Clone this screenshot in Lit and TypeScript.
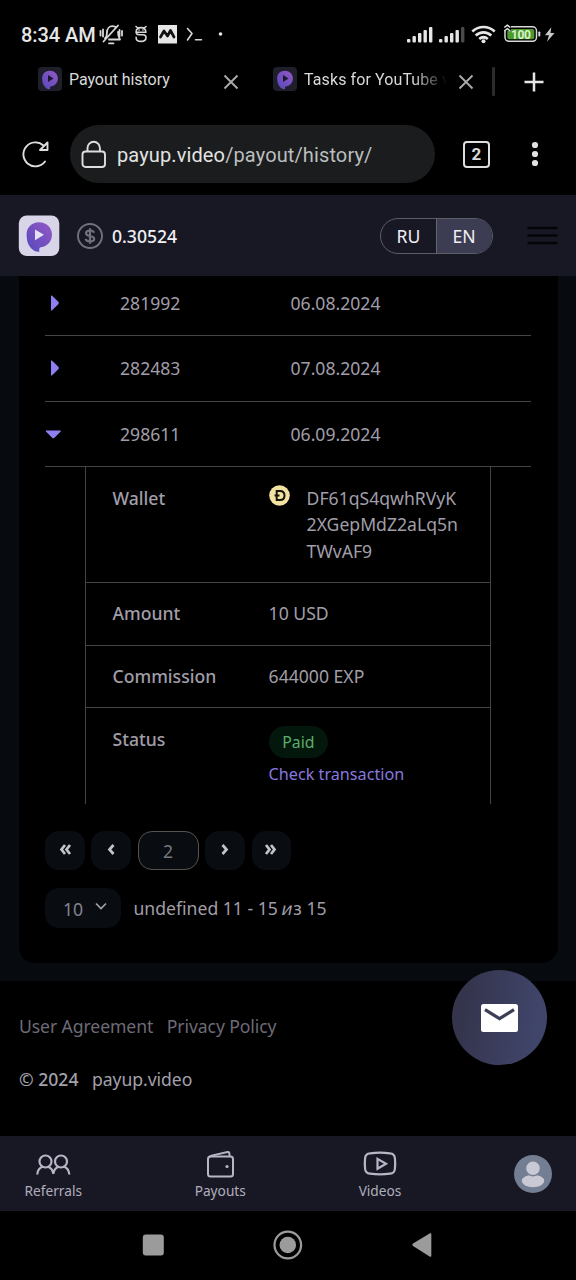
import { LitElement, html, css, svg } from "lit";
import { customElement, property } from "lit/decorators.js";

const pin = svg`<path d="M12 2.5C6.8 2.5 3 6.2 3 11.3c0 4 .8 7.6 3.3 10.2 1.9 2 4.2 2.9 6.2 2.5-.6-1-.4-1.9.2-3.1C17.800 20.600 21.500 16.600 21.500 11.600 21.500 6.300 17.400 2.500 12 2.500z" fill="url(#g)"/>`;
const pinGradient = svg`<defs><linearGradient id="g" x1="1" y1="0" x2="0" y2="1"><stop offset="0" stop-color="#9558c4"/><stop offset="1" stop-color="#5549bd"/></linearGradient></defs>`;

@customElement("status-bar")
export class StatusBar extends LitElement {
  static styles = css`
    :host { display: flex; height: 56px; box-sizing: border-box; padding: 14px 20px 0 21px; justify-content: space-between; align-items: flex-start; color: #e6e6e6; font-family: Roboto, sans-serif; }
    .left, .right { display: flex; height: 42px; align-items: center; }
    .time { font-size: 20px; font-weight: 500; width: 78px; white-space: nowrap; letter-spacing: -.08px; }
    svg { display: block; flex: none; }
    .battery { font-size: 12px; font-weight: 700; font-family: Roboto, sans-serif; }
  `;
  bars(dim: boolean) {
    return svg`${[0, 1, 2, 3, 4].map(i => svg`<rect x=${i * 5.5} y=${12.5 - i * 3} width="3.400" height=${3.500 + i * 3} rx="1" fill=${dim && i === 4 ? "#4a4a4a" : "#e6e6e6"}/>`)}`;
  }
  render() {
    return html`
      <div class="left">
        <span class="time">8:34 AM</span>
        <svg width="130" height="24" viewBox="99 23 130 24" fill="none" stroke="#d8d8d8" stroke-width="1.600" stroke-linecap="round" stroke-linejoin="round">
          <path d="M105 38.500c1.500-1.500 2-3 2-6 0-4 2.500-6.300 5.500-6.300 1.500 0 2.700.5 3.700 1.500M118 32c0 4 .8 5.500 2 7.500h-11M103.500 41.500l14.500-16M109 43.300h4.500M100.500 31v4.500M103 29.500v7M119.500 30v6.500M122 31v4.500" stroke-width="1.800"/>
          <path d="M136 26.500l1.800 1.500M146 26.500l-1.800 1.500M145.800 32c0-3-1.800-4.400-4.800-4.400s-4.900 1.400-4.900 4.400c0 2 1.500 2.800 3.500 2.800h3.400c2 0 3 .8 3 2.700 0 2.600-2 3.900-5 3.900s-4.900-1.300-4.900-4M136 32.200h10"/>
          <path d="M138.900 30h.3M142.800 30h.3" stroke-width="1.400"/>
          <rect x="158" y="25" width="19" height="18.500" fill="#e6e6e6" stroke="none"/>
          <path d="M160.500 37l3.500-6 3.500 5 3-5.500 3.500 6.500" stroke="#111" stroke-width="2.700"/>
          <path d="M187.500 28.500l4.500 5-4.500 6.500M195.500 39.700h6"/>
          <circle cx="220.500" cy="34" r="1.800" fill="#e6e6e6" stroke="none"/>
        </svg>
      </div>
      <div class="right">
        <svg width="150" height="24" viewBox="406 23 150 24">
          <g transform="translate(407 26.500)">${this.bars(false)}</g>
          <g transform="translate(439 26.500)">${this.bars(true)}</g>
          <g fill="none" stroke="#e6e6e6" stroke-width="2.700"><path d="M472.300 31.500c6.500-6 15.900-6 22.400 0M475.700 35.600c4.600-4.200 11-4.200 15.600 0M479.200 39c2.800-2.300 5.800-2.300 8.600 0"/></g>
          <circle cx="483.500" cy="41.200" r="2" fill="#e6e6e6"/>
          <rect x="505" y="26.800" width="31.500" height="14.500" rx="4" fill="none" stroke="#d8d8d8" stroke-width="1.500"/>
          <rect x="507.300" y="29" width="27" height="10.300" rx="2" fill="#4b9a2b"/>
          <path d="M503 24h8v7h-8z" fill="#000"/>
          <path d="M504.300 27.500l3-2.300 3 2.300M504.300 31l3-2.300 3 2.300" fill="none" stroke="#e6e6e6" stroke-width="1.500"/>
          <rect x="538.300" y="31.500" width="2" height="5" rx=".8" fill="#d8d8d8"/>
          <text class="battery" x="511" y="38.600" fill="#d9f2cc" textLength="20">100</text>
          <path d="M551.300 27.300l-6.300 8h4l-2 6.500 7.500-8.700h-4z" fill="#c8c8c8"/>
        </svg>
      </div>`;
  }
}

@customElement("browser-bar")
export class BrowserBar extends LitElement {
  static styles = css`
    :host { display: block; height: 139px; color: #d9d9d9; font-family: Roboto, sans-serif; }
    svg { display: block; flex: none; }
    .tabs { display: flex; height: 54px; padding-left: 37.5px; align-items: flex-start; padding-top: 11px; box-sizing: border-box; }
    .tab { display: flex; align-items: flex-start; }
    .first { width: 235.5px; }
    .label { font-size: 16px; line-height: 24px; padding-top: 1px; letter-spacing: -.06px; margin-left: 7.5px; width: 145px; margin-right: 9px; white-space: nowrap; }
    .second .label { letter-spacing: .1px; width: 143px; margin-left: 7px; margin-right: 11px; -webkit-mask-image: linear-gradient(90deg, #000 76%, transparent 100%); mask-image: linear-gradient(90deg, #000 76%, transparent 100%); }
    .close { margin-top: 7px; }
    .sep { width: 3px; height: 29px; background: #2c2c2e; margin: 0 29px 0 18px; border-radius: 1px; }
    .plus { margin-top: 5px; }
    .row { display: flex; align-items: center; height: 58px; padding: 15px 0 0 20px; }
    .url { display: flex; align-items: center; box-sizing: border-box; margin-left: 20px; width: 365px; height: 58px; border-radius: 29px; background: #1a1c1d; padding: 1px 0 0 11px; font-size: 20px; color: #bcbebf; }
    .lock { margin-right: 10px; }
    .address { letter-spacing: .12px; }
    .host { color: #e3e3e3; }
    .count { display: grid; place-items: center; box-sizing: border-box; width: 27px; height: 27px; border: 2px solid #dedede; border-radius: 4px; margin: 0 40.5px 0 28px; font-weight: 700; font-size: 17px; }
  `;
  favicon() {
    return html`<svg width="24" height="24" viewBox="0 0 24 24">${pinGradient}<rect width="24" height="24" rx="4" fill="#1f1f2c"/><g transform="translate(1.600 1.700) scale(.85)">${pin}</g><path d="M10 8l5.500 3.500L10 15z" fill="#1b1730"/></svg>`;
  }
  close() {
    return html`<svg class="close" width="16" height="16" viewBox="0 0 16 16" stroke="#aaa" stroke-width="1.900"><path d="M1.500 1.500l13 13M14.500 1.500l-13 13"/></svg>`;
  }
  render() {
    return html`
      <div class="tabs">
        <div class="tab first">${this.favicon()}<span class="label">Payout history</span>${this.close()}</div>
        <div class="tab second">${this.favicon()}<span class="label">Tasks for YouTube v</span>${this.close()}</div>
        <div class="sep"></div>
        <svg class="plus" width="20" height="20" viewBox="0 0 20 20" stroke="#e6e6e6" stroke-width="2.500"><path d="M0.500 10h19M10 .5v19"/></svg>
      </div>
      <div class="row">
        <svg width="30" height="30" viewBox="20 139 30 30" fill="none" stroke="#dedede" stroke-width="1.900" stroke-linecap="round" stroke-linejoin="round"><path d="M45 161.500A12 12 0 1 1 43.500 145.500M47.500 142.500v7.500h-7.500z"/></svg>
        <div class="url">
          <svg class="lock" width="26" height="30" viewBox="0 0 26 30" fill="none" stroke="#dedede" stroke-width="1.900"><rect x="1.500" y="11.500" width="22.500" height="15.500" rx="3"/><path d="M6.500 11.500V8a6.200 6.200 0 0 1 12.400 0v3.500"/></svg>
          <span class="address"><span class="host">payup.video</span>/payout/history/</span>
        </div>
        <div class="count">2</div>
        <svg width="8" height="26" viewBox="0 0 8 26" fill="#e2e2e2"><circle cx="4" cy="4" r="3.100"/><circle cx="4" cy="13" r="3.100"/><circle cx="4" cy="22" r="3.100"/></svg>
      </div>`;
  }
}

@customElement("site-header")
export class SiteHeader extends LitElement {
  static styles = css`
    :host { display: flex; align-items: center; height: 80.5px; box-sizing: border-box; padding: 1px 18px 0 18px; background: #181824; color: #f0f0f4; font: 500 17.6px "Noto Sans", sans-serif; }
    svg { display: block; flex: none; }
    .coin { margin: 0 9px 0 17px; }
    .balance { flex: 1; }
    .lang { display: flex; box-sizing: border-box; width: 112.5px; height: 36px; border: 1.5px solid #5d5d68; border-radius: 18px; overflow: hidden; margin-right: 34.5px; font-weight: 400; }
    .lang span { flex: 1; display: grid; place-items: center; padding-top: 1px; }
    .lang .on { background: #3c3d52; border-left: 1.5px solid #666672; }
  `;
  render() {
    return html`
      <svg width="42" height="42" viewBox="0 0 42 42">${pinGradient}<rect x=".8" y=".5" width="40.500" height="40.500" rx="8" fill="#d9d5e9"/><g transform="translate(4.500 3.800) scale(1.370)">${pin}</g><path d="M17 14.500l9 5.300-9 5.400z" fill="#e6e0f4"/></svg>
      <svg class="coin" width="26" height="26" viewBox="0 0 26 26" fill="none" stroke="#70707e" stroke-width="1.900"><circle cx="13" cy="13" r="12"/><path d="M17 9.800c-.4-1.500-1.800-2.300-4-2.300-2.500 0-4 1-4 2.700 0 3.900 8.200 1.700 8.200 5.600 0 1.700-1.700 2.700-4.200 2.700-2.400 0-4-.9-4.300-2.600M13 5.300v15.400" stroke-width="2.200"/></svg>
      <span class="balance">0.30524</span>
      <div class="lang"><span>RU</span><span class="on">EN</span></div>
      <svg width="31" height="20" viewBox="0 0 31 20" stroke="#050508" stroke-width="2.500"><path d="M.5 2h30M.5 9.500h30M.5 17h30"/></svg>`;
  }
}

@customElement("payout-row")
export class PayoutRow extends LitElement {
  @property() number = "";
  @property() date = "";
  @property({ type: Boolean }) open = false;
  static styles = css`
    :host { display: flex; align-items: center; height: 65.6px; box-sizing: border-box; border-bottom: 1px solid #444; }
    .mark { width: 75px; }
    .num { width: 170.5px; }
    svg { display: block; }
  `;
  render() {
    return html`
      <div class="mark"><svg width="18" height="18" viewBox="0 0 18 18" fill="#8f80f0">${this.open
        ? svg`<path d="M1 5.500h14.500q.7.4 0 1.200l-6.300 6.300q-.9.700-1.800 0l-6.300-6.300q-.7-.8-.1-1.200z"/>`
        : svg`<path d="M6 1.800q.4-.7 1.200 0l6.300 6.300q.7.900 0 1.800l-6.300 6.300q-.8.700-1.200 0z"/>`}</svg></div>
      <div class="num">${this.number}</div><div>${this.date}</div>`;
  }
}

@customElement("payout-card")
export class PayoutCard extends LitElement {
  static styles = css`
    :host { display: block; height: 705.500px; box-sizing: border-box; background: #070a0e; padding: 0 18.500px 18px 18.500px; font: 17.6px/26.4px "Noto Sans", sans-serif; color: #a09ea9; }
    svg { display: block; }
    .card { height: 687.500px; background: #000; border-radius: 0 0 16px 16px; box-sizing: border-box; padding: 0 26.500px; overflow: hidden; }
    .list { margin-top: -5px; height: 196.500px; }
    .detail { margin: 0 40px; height: 337px; box-sizing: border-box; border: solid #444; border-width: 0 1px; }
    .item { display: flex; box-sizing: border-box; border-bottom: 1px solid #444; padding: 17.900px 26.600px 16px; height: 63px; }
    .item.wallet { height: 115.500px; }
    .item.comm { height: 62.500px; }
    .item.status { height: 96px; border: 0; padding-top: 18px; }
    .key { width: 156px; flex: none; font-weight: 500; }
    .coin { margin: 0 17px 0 0; }
    .badge { display: block; box-sizing: border-box; width: 59.500px; height: 32px; line-height: 32px; text-align: center; border-radius: 16px; background: #03170c; color: #5caf69; font-size: 15.800px; }
    .link { display: block; font-size: 16.200px; line-height: 24px; margin-top: 4px; color: #8878df; white-space: nowrap; }
    .pages { display: flex; gap: 6.800px; margin-top: 26.500px; }
    .btn { display: grid; place-items: center; width: 39.500px; height: 39.500px; border-radius: 14px; background: #090d11; }
    .current { box-sizing: border-box; width: 61px; border: 1px solid #55554f; color: #777682; padding-top: 1px; }
    .foot { display: flex; margin-top: 18px; gap: 13px; align-items: center; }
    .select { display: flex; box-sizing: border-box; width: 75.500px; height: 39.500px; border-radius: 14px; background: #090d11; color: #85838f; padding: 8px 0 0 18px; gap: 11.500px; }
    .select svg { margin-top: 6px; }
    .cyr { display: inline-block; transform: skewX(-12deg); }
  `;
  arrow(d: string) {
    return html`<div class="btn"><svg width="16" height="16" viewBox="0 0 16 16" fill="none" stroke="#c4c4ca" stroke-width="2.700"><path d=${d}/></svg></div>`;
  }
  render() {
    return html`
      <div class="card">
        <div class="list">
          <payout-row number="281992" date="06.08.2024"></payout-row>
          <payout-row number="282483" date="07.08.2024"></payout-row>
          <payout-row number="298611" date="06.09.2024" open></payout-row>
        </div>
        <div class="detail">
          <div class="item wallet"><div class="key">Wallet</div>
            <svg class="coin" width="21" height="21" viewBox="0 0 21 21"><circle cx="10.500" cy="10.500" r="10.300" fill="#f3e3a3"/><path d="M7.700 6h3.300c2.900 0 4.500 1.700 4.500 4.500S13.900 15 11 15H7.700zM5.500 10.500h5" fill="none" stroke="#17140a" stroke-width="2"/></svg>
            <div>DF61qS4qwhRVyK<br>2XGepMdZ2aLq5n<br>TWvAF9</div></div>
          <div class="item"><div class="key">Amount</div><div>10 USD</div></div>
          <div class="item comm"><div class="key">Commission</div><div>644000 EXP</div></div>
          <div class="item status"><div class="key">Status</div><div><span class="badge">Paid</span><span class="link">Check transaction</span></div></div>
        </div>
        <div class="pages">
          ${this.arrow("M8 3L4.500 7.500 8 12M13 3L9.500 7.500 13 12")}
          ${this.arrow("M10.500 3L6.500 7.500l4 4.500")}
          <div class="btn current">2</div>
          ${this.arrow("M5.500 3L9.500 7.500l-4 4.500")}
          ${this.arrow("M3 3l3.500 4.500L3 12M8 3l3.500 4.500L8 12")}
        </div>
        <div class="foot">
          <div class="select">10<svg width="12" height="9" viewBox="0 0 12 9" fill="none" stroke="#a3a1ab" stroke-width="1.700"><path d="M1 1.500l5 5 5-5"/></svg></div>
          <span>undefined 11 - 15 <span class="cyr">и</span>з 15</span>
        </div>
      </div>`;
  }
}

@customElement("site-footer")
export class SiteFooter extends LitElement {
  static styles = css`
    :host { display: block; position: relative; height: 155px; box-sizing: border-box; padding: 32px 19px 0; font: 17.6px/26.4px "Noto Sans", sans-serif; color: #a3a1ab; }
    .line { display: flex; gap: 13.500px; margin-bottom: 27px; }
    .links { color: #6d6b77; letter-spacing: -.09px; }
    .year { font-weight: 500; }
    .site { letter-spacing: -.06px; }
    .fab { position: absolute; right: 29px; top: -11.500px; width: 95.500px; height: 95.500px; border-radius: 50%; background: linear-gradient(100deg, #34344c 15%, #40456a 85%); display: grid; place-items: center; }
    svg { display: block; }
    .fab svg { margin-top: 2px; }
  `;
  render() {
    return html`
      <div class="line links"><span>User Agreement</span><span>Privacy Policy</span></div>
      <div class="line"><span class="year">© 2024</span><span class="site">payup.video</span></div>
      <div class="fab"><svg width="37" height="28" viewBox="0 0 37 28"><rect width="37" height="28" rx="2.500" fill="#fff"/><path d="M4 5.700l14.500 9 14.500-9" fill="none" stroke="#3c3e55" stroke-width="3.200"/></svg></div>`;
  }
}

@customElement("bottom-nav")
export class BottomNav extends LitElement {
  static styles = css`
    :host { display: grid; grid-template-columns: 106.500px 227.500px 92px 150px; height: 74.500px; background: #181824; color: #b0aebc; font: 13.700px/20px "Noto Sans", sans-serif; }
    .item { display: flex; flex-direction: column; align-items: center; padding-top: 12.500px; }
    svg { display: block; }
    .label { margin-top: 2.500px; }
    .me { padding: 19px 0 0 88px; align-items: flex-start; }
  `;
  render() {
    return html`
      <div class="item"><svg width="36" height="30" viewBox="0 0 36 30" fill="none" stroke="#b7b5c6" stroke-width="2.200"><circle cx="10.500" cy="12.500" r="6"/><circle cx="26" cy="12.500" r="6"/><path d="M2.300 25.500c.2-4 2.200-7 5.700-8M13 17.700c2.800 1 4.900 3.700 5.300 7.300.4-3.500 2.300-6.200 5.200-7.300M28.500 17.500c3.500 1 5.500 4 5.800 8"/></svg><span class="label">Referrals</span></div>
      <div class="item"><svg width="30" height="30" viewBox="0 0 30 30" fill="none" stroke="#b7b5c6" stroke-width="2"><rect x="3" y="7.500" width="25" height="20" rx="2.500"/><path d="M3.500 9c.4-1.600 1.300-2 3-2.400L22.500 3c1-.2 1.600.2 1.800 1.200l.3 2.600" /><circle cx="22" cy="17.500" r="1.600" fill="#b7b5c6" stroke="none"/></svg><span class="label">Payouts</span></div>
      <div class="item"><svg width="34" height="30" viewBox="0 0 34 30" fill="none" stroke="#b7b5c6" stroke-width="2.200"><path d="M7 4.300q10-1.200 20 0 4.500.4 4.900 4.700.6 5.500 0 11-.4 4.300-4.900 4.700-10 1.200-20 0-4.500-.4-4.900-4.700-.6-5.500 0-11 .4-4.300 4.900-4.700z"/><path d="M14.500 9.800v10l8.500-5z"/></svg><span class="label">Videos</span></div>
      <div class="item me"><svg width="38" height="38" viewBox="0 0 38 38"><circle cx="19" cy="19" r="19" fill="#747e92"/><ellipse cx="19" cy="26" rx="11.200" ry="6.200" fill="#c9c8d5"/><circle cx="19" cy="13.200" r="7.500" fill="#c9c8d5" stroke="#747e92" stroke-width="1.400"/></svg></div>`;
  }
}

@customElement("system-nav")
export class SystemNav extends LitElement {
  static styles = css`
    :host { display: flex; height: 69.500px; align-items: center; gap: 108px; padding-left: 142px; }
    svg { display: block; }
  `;
  render() {
    return html`
      <svg width="22" height="22" viewBox="0 0 22 22"><rect x=".8" y=".6" width="21" height="21" rx="3" fill="#9b9b9b"/></svg>
      <svg width="32" height="32" viewBox="0 0 32 32"><circle cx="15.800" cy="16" r="13.300" fill="none" stroke="#9b9b9b" stroke-width="2.200"/><circle cx="15.800" cy="16" r="8.300" fill="#9b9b9b"/></svg>
      <svg width="22" height="28" viewBox="0 0 22 28"><path d="M1 12.600L18 2.300q1.300-.5 1.300 1v21.400q0 1.500-1.300 1L1 15q-1.300-1.200 0-2.400z" fill="#9b9b9b"/></svg>`;
  }
}

@customElement("app-root")
export class AppRoot extends LitElement {
  static styles = css`
    :host { display: block; width: 576px; height: 1280px; overflow: hidden; background: #000; }
  `;
  render() {
    return html`<status-bar></status-bar><browser-bar></browser-bar><site-header></site-header><payout-card></payout-card><site-footer></site-footer><bottom-nav></bottom-nav><system-nav></system-nav>`;
  }
}
